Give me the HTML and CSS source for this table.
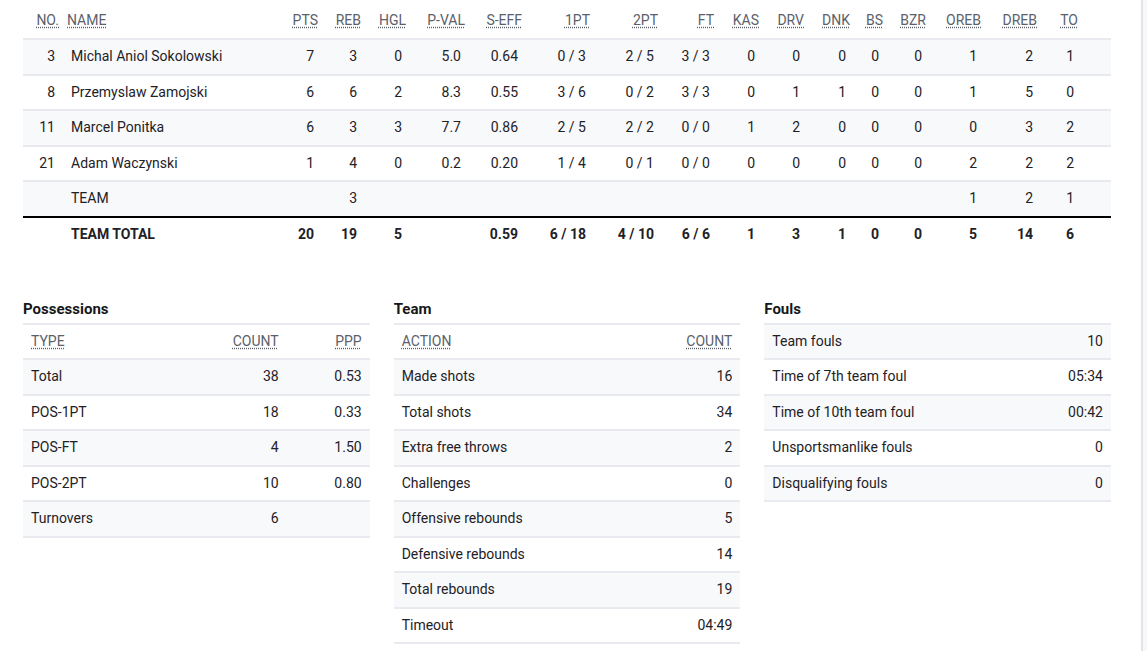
FILE: index.html
```html
<!DOCTYPE html>
<html lang="en">
<head>
<meta charset="utf-8">
<title>Box score</title>
<link rel="stylesheet" href="styles.css">
</head>
<body>
<div class="frame">
  <div class="panel">
    <table class="box">
      <colgroup>
        <col class="c40"><col class="c216"><col class="c43"><col class="c43"><col class="c45"><col class="c59"><col class="c57"><col class="c68"><col class="c68"><col class="c56"><col class="c45"><col class="c45"><col class="c46"><col class="c33"><col class="c43"><col class="c55"><col class="c56"><col class="c41"><col class="c29">
      </colgroup>
      <thead>
        <tr>
          <th class="r"><abbr title="Number">NO.</abbr></th>
          <th class="l"><abbr title="Name">NAME</abbr></th>
          <th><abbr title="Points">PTS</abbr></th>
          <th><abbr title="Rebounds">REB</abbr></th>
          <th><abbr title="Highlights">HGL</abbr></th>
          <th><abbr title="Player value">P-VAL</abbr></th>
          <th><abbr title="Shooting efficiency">S-EFF</abbr></th>
          <th><abbr title="1 point shots">1PT</abbr></th>
          <th><abbr title="2 point shots">2PT</abbr></th>
          <th><abbr title="Free throws">FT</abbr></th>
          <th><abbr title="Key assists">KAS</abbr></th>
          <th><abbr title="Drives">DRV</abbr></th>
          <th><abbr title="Dunks">DNK</abbr></th>
          <th><abbr title="Blocked shots">BS</abbr></th>
          <th><abbr title="Buzzer beaters">BZR</abbr></th>
          <th><abbr title="Offensive rebounds">OREB</abbr></th>
          <th><abbr title="Defensive rebounds">DREB</abbr></th>
          <th><abbr title="Turnovers">TO</abbr></th>
          <th></th>
        </tr>
      </thead>
      <tbody>
        <tr class="odd">
          <td>3</td><td class="l">Michal Aniol Sokolowski</td><td>7</td><td>3</td><td>0</td><td>5.0</td><td>0.64</td><td>0 / 3</td><td>2 / 5</td><td>3 / 3</td><td>0</td><td>0</td><td>0</td><td>0</td><td>0</td><td>1</td><td>2</td><td>1</td><td></td>
        </tr>
        <tr>
          <td>8</td><td class="l">Przemyslaw Zamojski</td><td>6</td><td>6</td><td>2</td><td>8.3</td><td>0.55</td><td>3 / 6</td><td>0 / 2</td><td>3 / 3</td><td>0</td><td>1</td><td>1</td><td>0</td><td>0</td><td>1</td><td>5</td><td>0</td><td></td>
        </tr>
        <tr class="odd">
          <td>11</td><td class="l">Marcel Ponitka</td><td>6</td><td>3</td><td>3</td><td>7.7</td><td>0.86</td><td>2 / 5</td><td>2 / 2</td><td>0 / 0</td><td>1</td><td>2</td><td>0</td><td>0</td><td>0</td><td>0</td><td>3</td><td>2</td><td></td>
        </tr>
        <tr>
          <td>21</td><td class="l">Adam Waczynski</td><td>1</td><td>4</td><td>0</td><td>0.2</td><td>0.20</td><td>1 / 4</td><td>0 / 1</td><td>0 / 0</td><td>0</td><td>0</td><td>0</td><td>0</td><td>0</td><td>2</td><td>2</td><td>2</td><td></td>
        </tr>
        <tr class="odd team">
          <td></td><td class="l">TEAM</td><td></td><td>3</td><td></td><td></td><td></td><td></td><td></td><td></td><td></td><td></td><td></td><td></td><td></td><td>1</td><td>2</td><td>1</td><td></td>
        </tr>
        <tr class="total">
          <td></td><td class="l">TEAM TOTAL</td><td>20</td><td>19</td><td>5</td><td></td><td>0.59</td><td>6 / 18</td><td>4 / 10</td><td>6 / 6</td><td>1</td><td>3</td><td>1</td><td>0</td><td>0</td><td>5</td><td>14</td><td>6</td><td></td>
        </tr>
      </tbody>
    </table>

    <div class="stats">
      <section class="block">
        <h3 class="title">Possessions</h3>
        <table class="mini">
          <colgroup><col><col class="m100"><col class="m83"></colgroup>
          <thead>
            <tr><th class="l"><abbr title="Type">TYPE</abbr></th><th><abbr title="Count">COUNT</abbr></th><th><abbr title="Points per possession">PPP</abbr></th></tr>
          </thead>
          <tbody>
            <tr class="odd"><td class="l">Total</td><td>38</td><td>0.53</td></tr>
            <tr><td class="l">POS-1PT</td><td>18</td><td>0.33</td></tr>
            <tr class="odd"><td class="l">POS-FT</td><td>4</td><td>1.50</td></tr>
            <tr><td class="l">POS-2PT</td><td>10</td><td>0.80</td></tr>
            <tr class="odd"><td class="l">Turnovers</td><td>6</td><td></td></tr>
          </tbody>
        </table>
      </section>

      <section class="block">
        <h3 class="title">Team</h3>
        <table class="mini">
          <thead>
            <tr><th class="l"><abbr title="Action">ACTION</abbr></th><th><abbr title="Count">COUNT</abbr></th></tr>
          </thead>
          <tbody>
            <tr class="odd"><td class="l">Made shots</td><td>16</td></tr>
            <tr><td class="l">Total shots</td><td>34</td></tr>
            <tr class="odd"><td class="l">Extra free throws</td><td>2</td></tr>
            <tr><td class="l">Challenges</td><td>0</td></tr>
            <tr class="odd"><td class="l">Offensive rebounds</td><td>5</td></tr>
            <tr><td class="l">Defensive rebounds</td><td>14</td></tr>
            <tr class="odd"><td class="l">Total rebounds</td><td>19</td></tr>
            <tr><td class="l">Timeout</td><td>04:49</td></tr>
          </tbody>
        </table>
      </section>

      <section class="block">
        <h3 class="title">Fouls</h3>
        <table class="mini">
          <tbody>
            <tr class="odd"><td class="l">Team fouls</td><td>10</td></tr>
            <tr><td class="l">Time of 7th team foul</td><td>05:34</td></tr>
            <tr class="odd"><td class="l">Time of 10th team foul</td><td>00:42</td></tr>
            <tr><td class="l">Unsportsmanlike fouls</td><td>0</td></tr>
            <tr class="odd"><td class="l">Disqualifying fouls</td><td>0</td></tr>
          </tbody>
        </table>
      </section>
    </div>
  </div>
</div>
</body>
</html>
```

FILE: styles.css
```css
html, body {
  margin: 0;
  padding: 0;
  background: #f7f8fa;
}

body {
  font-family: Roboto, "Liberation Sans", Arial, sans-serif;
  font-size: 14px;
  color: #1e2126;
}

.frame {
  width: 1143px;
  height: 651px;
  background: #ffffff;
  border-right: 2px solid #e2e3e6;
  box-sizing: border-box;
  overflow: hidden;
}

.panel {
  padding: 4px 0 0 23px;
  width: 1088px;
}

table {
  border-collapse: collapse;
  border-spacing: 0;
  width: 100%;
  table-layout: fixed;
}

th, td {
  line-height: 17.5px;
  text-align: right;
  white-space: nowrap;
  font-weight: 400;
}

th {
  color: #5b606b;
}

abbr {
  text-decoration: underline dotted;
  text-underline-offset: 2px;
  cursor: help;
}

.l { text-align: left; }
.r { text-align: right; }

/* main box score */
.box th {
  padding: 7.5px 4px 9px;
}

.box td {
  padding: 8px 8px;
}

.box tbody tr {
  border-top: 2px solid #e9eaf0;
}

.box tr.odd {
  background: #f8f9fb;
}

.box tr.team {
  border-bottom: 2px solid #000000;
}

.box tr.total td {
  font-weight: 700;
}

.c40 { width: 40px; }
.c216 { width: 216px; }
.c43 { width: 43px; }
.c45 { width: 45px; }
.c59 { width: 59px; }
.c57 { width: 57px; }
.c68 { width: 68px; }
.c56 { width: 56px; }
.c46 { width: 46px; }
.c33 { width: 33px; }
.c55 { width: 55px; }
.c41 { width: 41px; }
.c29 { width: 29px; }

/* lower stats */
.stats {
  display: grid;
  grid-template-columns: repeat(3, 1fr);
  column-gap: 24px;
  align-items: start;
  padding-top: 48px;
}

.title {
  margin: 0 0 3.5px;
  font-size: 15px;
  line-height: 20px;
  font-weight: 700;
  color: #15171a;
}

.mini th, .mini td {
  padding: 8px 8px;
}

.mini tr {
  border-top: 2px solid #e9eaf0;
}

.mini {
  border-bottom: 2px solid #e9eaf0;
}

.mini tr.odd {
  background: #f8f9fb;
}

.m100 { width: 100px; }
.m83 { width: 83px; }
```
